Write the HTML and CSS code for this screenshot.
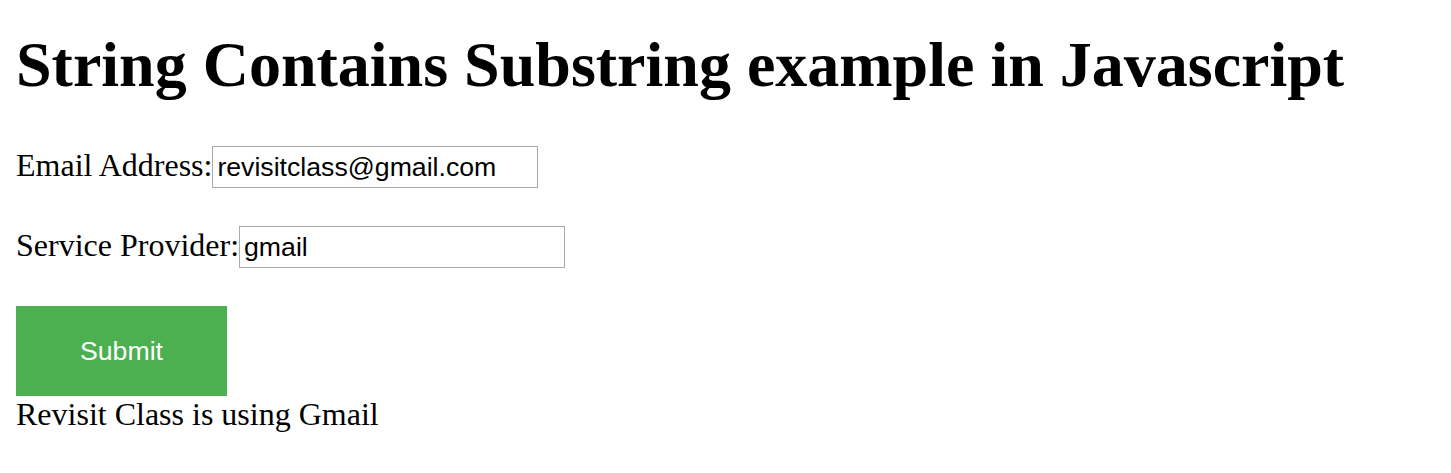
FILE: index.html
```html
<!doctype html>
<html>
  <head>
    <title>String Contains Substring example in Javascript</title>
    <link rel="stylesheet" href="styles.css">
  </head>
  <body>
    <div id="page">
      <h1 class="title">String Contains Substring example in Javascript</h1>

      <div class="field">
        <label for="email">Email Address:</label><input class="text-input" id="email" value="revisitclass@gmail.com">
      </div>

      <div class="field">
        <label for="provider">Service Provider:</label><input class="text-input" id="provider" value="gmail">
      </div>

      <button class="submit-btn">Submit</button>
      <div class="result">Revisit Class is using Gmail</div>
    </div>
  </body>
</html>
```

FILE: styles.css
```css
* { margin: 0; padding: 0; box-sizing: border-box; }
body { font: 32px "Liberation Serif", "Times New Roman", serif; color: #000; background: #fff; }
#page { padding: 0 16px; }
.title { font-size: 64px; font-weight: bold; line-height: 74px; margin: 28px 0 44px; }
.field { display: flex; align-items: baseline; margin-bottom: 38px; line-height: 37px; }
.text-input { width: 326px; height: 42px; padding: 0 4px; border: 1px solid #a9a9a9; font: 26.667px "Liberation Sans", Arial, sans-serif; color: #000; outline: none; }
.submit-btn { display: block; background: #4caf50; color: #fff; border: none; padding: 30px 64px; font: 26.667px "Liberation Sans", Arial, sans-serif; line-height: 30px; }
.result { line-height: 37px; }
```
